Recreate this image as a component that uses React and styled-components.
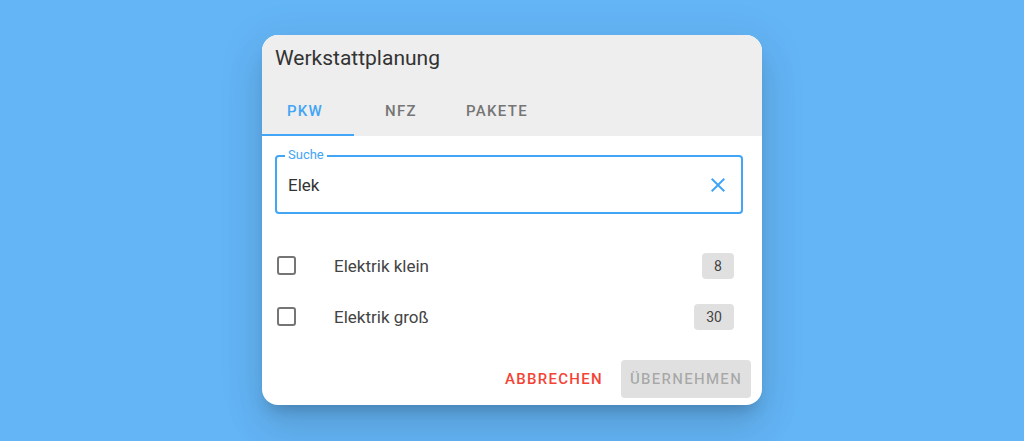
import React, { useState } from 'react'
import styled, { createGlobalStyle } from 'styled-components'

const GlobalStyle = createGlobalStyle`
  html, body {
    margin: 0;
    padding: 0;
    background: #64b5f6;
    font-family: Roboto, 'Noto Sans', sans-serif;
  }
`

const tabs = ['PKW', 'NFZ', 'PAKETE']
const items = [
  { label: 'Elektrik klein', count: 8 },
  { label: 'Elektrik groß', count: 30 },
]

const App = () => {
  const [active, setActive] = useState(0)
  const [query, setQuery] = useState('Elek')

  return (
    <Page>
      <GlobalStyle />
      <Dialog>
        <Header>
          <Title>Werkstattplanung</Title>
          <TabBar>
            {tabs.map((t, i) => (
              <Tab key={t} $active={i === active} onClick={() => setActive(i)}>
                {t}
              </Tab>
            ))}
          </TabBar>
        </Header>
        <Body>
          <Field>
            <Legend>Suche</Legend>
            <Input value={query} onChange={(e) => setQuery(e.target.value)} />
            <ClearButton onClick={() => setQuery('')} aria-label='clear'>
              <svg width='24' height='24' viewBox='0 0 24 24'>
                <path
                  d='M19 6.41 17.59 5 12 10.59 6.41 5 5 6.41 10.59 12 5 17.59 6.41 19 12 13.41 17.59 19 19 17.59 13.41 12z'
                  fill='#42a5f5'
                />
              </svg>
            </ClearButton>
          </Field>
          <List>
            {items.map((it) => (
              <Row key={it.label}>
                <Box />
                <Label>{it.label}</Label>
                <Badge>{it.count}</Badge>
              </Row>
            ))}
          </List>
        </Body>
        <Actions>
          <TextButton>Abbrechen</TextButton>
          <DisabledButton disabled>Übernehmen</DisabledButton>
        </Actions>
      </Dialog>
    </Page>
  )
}

const Page = styled.div`
  width: 1024px;
  height: 441px;
  display: flex;
  justify-content: center;
  padding-top: 35px;
  box-sizing: border-box;
`
const Dialog = styled.div`
  width: 500px;
  height: 370px;
  background: #fff;
  border-radius: 16px;
  overflow: hidden;
  box-shadow: 0 11px 15px -7px rgba(0, 0, 0, 0.2),
    0 24px 38px 3px rgba(0, 0, 0, 0.08), 0 9px 46px 8px rgba(0, 0, 0, 0.06);
  display: flex;
  flex-direction: column;
`
const Header = styled.div`
  background: #eeeeee;
  height: 101px;
  display: flex;
  flex-direction: column;
`
const Title = styled.h2`
  margin: 0;
  padding: 11px 13px 0;
  height: 42px;
  font-size: 21px;
  font-weight: 400;
  line-height: 24px;
  color: #333;
`
const TabBar = styled.div`
  display: flex;
  gap: 4px;
  height: 48px;
  margin-top: 11px;
`
const Tab = styled.div`
  width: 92px;
  height: 48px;
  box-sizing: border-box;
  display: flex;
  align-items: center;
  justify-content: center;
  font-size: 15px;
  font-weight: 500;
  letter-spacing: 1.3px;
  color: ${(p) => (p.$active ? '#42a5f5' : '#757575')};
  border-bottom: 2px solid ${(p) => (p.$active ? '#42a5f5' : 'transparent')};
  padding: 0 6px 0 0;
  cursor: pointer;
`
const Body = styled.div`
  padding: 19px 19px 0 13px;
  flex: 1;
`
const Field = styled.div`
  position: relative;
  height: 59px;
  box-sizing: border-box;
  border: 2px solid #42a5f5;
  border-radius: 4px;
  display: flex;
  align-items: center;
  padding: 0 11px 0 11px;
`
const Legend = styled.span`
  position: absolute;
  top: -9px;
  left: 8px;
  padding: 0 3px;
  background: #fff;
  font-size: 13px;
  line-height: 14px;
  color: #42a5f5;
`
const Input = styled.input`
  flex: 1;
  border: none;
  outline: none;
  font-family: Roboto, sans-serif;
  font-size: 17px;
  color: #333;
  padding: 0;
  background: transparent;
`
const ClearButton = styled.button`
  border: none;
  background: none;
  padding: 0;
  display: flex;
  cursor: pointer;
`
const List = styled.div`
  margin-top: 26px;
  display: flex;
  flex-direction: column;
`
const Row = styled.div`
  height: 51px;
  display: flex;
  align-items: center;
  padding: 0 9px 0 2px;
`
const Box = styled.span`
  width: 19px;
  height: 19px;
  box-sizing: border-box;
  border: 2px solid #757575;
  border-radius: 3px;
`
const Label = styled.span`
  flex: 1;
  margin-left: 38px;
  font-size: 17px;
  color: #444;
`
const Badge = styled.span`
  min-width: 32px;
  height: 26px;
  padding: 0 12px;
  box-sizing: border-box;
  display: flex;
  align-items: center;
  justify-content: center;
  background: #e0e0e0;
  border-radius: 4px;
  font-size: 14px;
  color: #444;
`
const Actions = styled.div`
  display: flex;
  justify-content: flex-end;
  align-items: center;
  gap: 10px;
  padding: 0 11px 7px;
`
const buttonBase = `
  height: 38px;
  border: none;
  border-radius: 4px;
  font-family: Roboto, sans-serif;
  font-size: 15px;
  font-weight: 500;
  letter-spacing: 1.3px;
  text-transform: uppercase;
`
const TextButton = styled.button`
  ${buttonBase}
  background: transparent;
  color: #f44336;
  padding: 0 8px;
  cursor: pointer;
`
const DisabledButton = styled.button`
  ${buttonBase}
  width: 130px;
  background: #e0e0e0;
  color: rgba(0, 0, 0, 0.26);
  padding: 0;
`

export default App
